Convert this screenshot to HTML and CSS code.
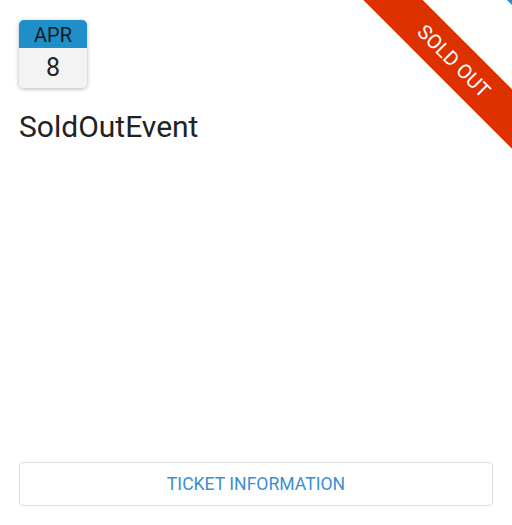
FILE: index.html
```html
<!DOCTYPE html>
<html>
<head>
<meta charset="utf-8">
<link rel="stylesheet" href="styles.css">
</head>
<body>
<div class="card">
  <div class="corner"></div>
  <div class="ribbon">SOLD OUT</div>
  <div class="cal">
    <div class="cal-month">APR</div>
    <div class="cal-day">8</div>
  </div>
  <h1 class="title">SoldOutEvent</h1>
  <div class="spacer"></div>
  <button class="ticket-btn">TICKET INFORMATION</button>
</div>
</body>
</html>
```
FILE: styles.css
```css
html, body {
  margin: 0;
  padding: 0;
  background: #fff;
}
.card {
  position: relative;
  overflow: hidden;
  box-sizing: border-box;
  width: 512px;
  height: 525px;
  padding: 20px 19px 19px 19px;
  display: flex;
  flex-direction: column;
  font-family: Roboto, "Liberation Sans", sans-serif;
}
.cal {
  width: 68px;
  border-radius: 5px;
  overflow: hidden;
  box-shadow: 0 1px 4px rgba(0,0,0,0.3);
  text-align: center;
}
.cal-month {
  background: #1f8fc9;
  color: #1a1a1a;
  height: 28px;
  line-height: 30px;
  font-size: 20px;
}
.cal-day {
  background: #f3f3f3;
  color: #222;
  height: 40px;
  line-height: 40px;
  font-size: 25px;
}
.title {
  margin: 22px 0 0 0;
  font-weight: 400;
  font-size: 30px;
  line-height: 34px;
  color: #222;
}
.spacer {
  flex: 1;
}
.ticket-btn {
  height: 44px;
  width: 100%;
  border: 1px solid #dedede;
  border-radius: 4px;
  background: #fff;
  color: #3b8fd0;
  font-family: Roboto, "Liberation Sans", sans-serif;
  font-size: 17.6px;
  padding: 0;
}
.ribbon {
  position: absolute;
  left: 344px;
  top: 40px;
  width: 220px;
  height: 42px;
  line-height: 42px;
  transform: rotate(45deg);
  background: #dd3100;
  color: #fff;
  text-align: center;
  font-size: 20px;
}
.corner {
  position: absolute;
  right: 0;
  top: 0;
  width: 0;
  height: 0;
  border-top: 5px solid #1f8fc9;
  border-left: 5px solid transparent;
}
```
